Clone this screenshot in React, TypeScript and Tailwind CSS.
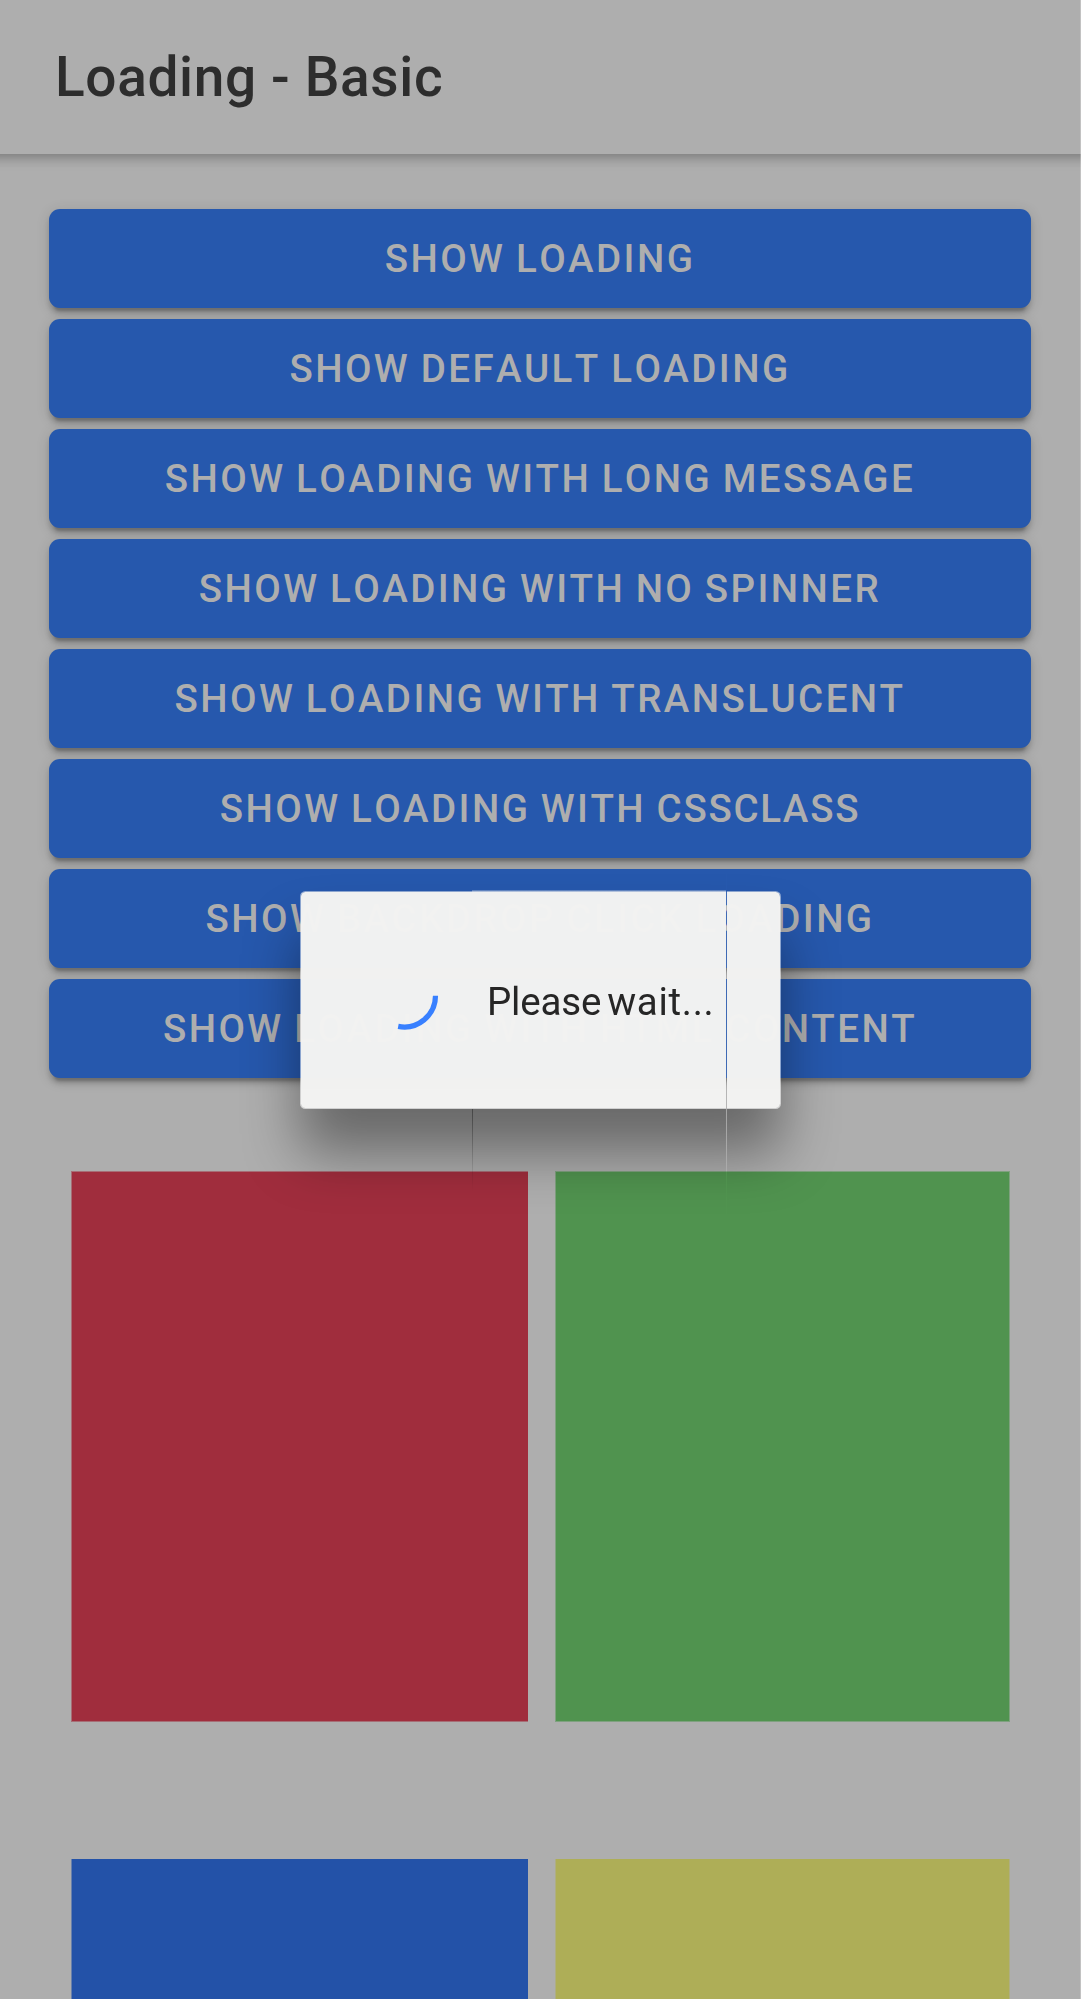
const buttons = [
  "Show Loading",
  "Show Default Loading",
  "Show Loading with Long Message",
  "Show Loading with No Spinner",
  "Show Loading with Translucent",
  "Show Loading with CSSClass",
  "Show Backdrop Click Loading",
  "Show Loading with HTML Content",
];

function Header() {
  return (
    <header className="relative -mx-[30px] flex h-[154px] items-center bg-[#aeaeae] pl-[85px] shadow-[0_5.5px_11px_-2.75px_rgba(0,0,0,0.2),0_11px_13.75px_rgba(0,0,0,0.02),0_2.75px_11px_rgba(0,0,0,0.12)]">
      <h1 className="text-[55px] leading-[66px] font-medium tracking-[0.0115em] text-[#2d2d2d]">
        Loading - Basic
      </h1>
    </header>
  );
}

function ActionButton({ label }: { label: string }) {
  const words = label.split(" ");
  return (
    <button className="flex h-[99px] w-full items-center justify-center rounded-[11px] bg-[#2658ad] pt-0.5 text-[38.5px] leading-none font-medium tracking-[0.0628em] text-[#aeaeae] uppercase shadow-[0_8.25px_2.75px_-5.5px_rgba(0,0,0,0.2),0_5.5px_5.5px_0_rgba(0,0,0,0.14),0_2.75px_13.75px_0_rgba(0,0,0,0.12)] [font-kerning:none] [word-spacing:-1.5px]">
      <span>
        {words.slice(0, -1).join(" ")}{" "}
        <span className={words[words.length - 1] === "CSSClass" ? "tracking-[0.045em]" : ""}>
          {words[words.length - 1]}
        </span>
      </span>
    </button>
  );
}

function Spinner() {
  return (
    <svg className="size-[77px]" viewBox="0 0 77 77" fill="none">
      <path d="M69.5 33.8A31.3 31.3 0 0 1 32.2 64.4" stroke="#3880ff" strokeWidth="5.2" />
    </svg>
  );
}

function LoadingDialog() {
  return (
    <div className="absolute top-[791px] left-[200px] p-[100px] pb-[150px] [mask-image:linear-gradient(to_right,#000_526px,rgba(0,0,0,0.12)_526px,rgba(0,0,0,0.12)_527px,#000_527px)]">
      <div className="flex h-[218px] w-[481px] items-center rounded-[5.5px] border border-[#f2f2f2]/50 bg-[rgba(242,242,241,0.994)] bg-clip-padding pl-[65px] shadow-[0_44px_55px_rgba(0,0,0,0.4)]">
        <Spinner />
        <p className="mt-[3px] ml-[44px] text-[38.5px] leading-[46px] whitespace-nowrap text-[#262626] [word-spacing:-3.5px]">
          <span className="tracking-[-0.2px]">Please</span>{" "}
          <span className="tracking-[0.7px]">wait...</span>
        </p>
      </div>
      <div className="absolute top-[99px] left-[272px] h-0.5 w-[254px] bg-linear-to-b from-[#f2f2f2]/25 to-[#f2f2f2]/40" />
      <div className="absolute top-[318px] left-[272px] h-[82px] w-px bg-linear-to-b from-black/35 to-transparent" />
    </div>
  );
}

export default function App() {
  return (
    <div className="relative h-[1999px] w-[1081px] overflow-hidden bg-[#aeaeae] font-[Roboto,sans-serif]">
      <Header />
      <main>
        <div className="ml-[49px] flex w-[982px] flex-col gap-[11px] pt-[55px]">
          {buttons.map((label) => (
            <ActionButton key={label} label={label} />
          ))}
        </div>
        <div className="mt-[93px] ml-[71px] grid grid-cols-[457px_455px] gap-x-[27px] gap-y-[137px]">
          <div className="h-[551px] border border-r-0 border-[#a76e76] bg-[#a02d3d]" />
          <div className="h-[551px] border border-[#7fa17f] bg-[#50934f]" />
          <div className="h-[551px] border-l border-[#6880ab] bg-[#2352a8]" />
          <div className="h-[551px] border-x border-[#aeae83] bg-[#aeae57]" />
        </div>
      </main>
      <LoadingDialog />
      <div className="absolute inset-y-0 right-0 w-px bg-white/25" />
    </div>
  );
}
